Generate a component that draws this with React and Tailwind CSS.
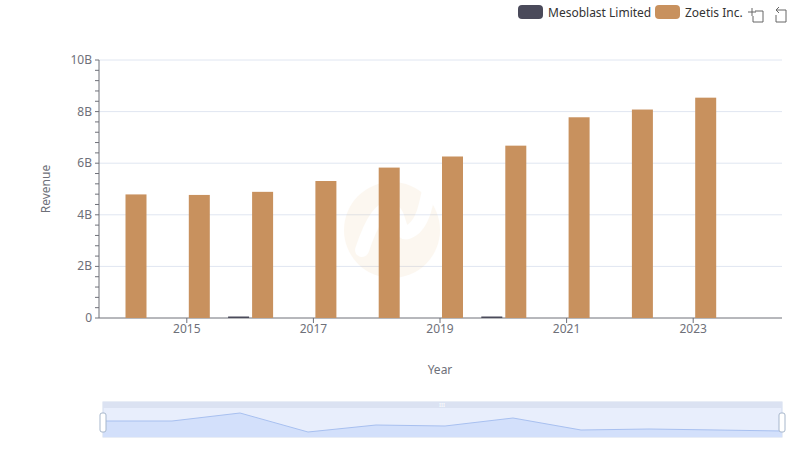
export default function App() {
  const z = [4.79, 4.77, 4.89, 5.31, 5.83, 6.26, 6.68, 7.78, 8.08, 8.54];
  const m = [0, 0, 0.05, 0, 0, 0, 0.03, 0, 0, 0];
  const y0 = 318, per = 25.8;
  const cx = (i) => 123.5 + i * 63.3;
  const slider = [[103,421],[172,421],[240,413],[308,432],[376,425],[445,426],[513,418],[581,430],[649,429],[718,430],[782,431]];
  const line = slider.map(p => p.join(",")).join(" ");
  return (
    <div className="w-[800px] h-[461px] bg-white font-['Liberation_Sans',Arial,sans-serif]">
      <svg width="800" height="461" className="block font-['Liberation_Sans',Arial,sans-serif]">
        <rect x="518" y="5" width="25" height="14" rx="4" fill="#4a4a5a" />
        <text x="548" y="17" fontSize="12" fill="#333">Mesoblast Limited</text>
        <rect x="655" y="5" width="25" height="14" rx="4" fill="#c8915e" />
        <text x="685" y="17" fontSize="12" fill="#333">Zoetis Inc.</text>
        <g stroke="#666" fill="none" strokeWidth="1">
          <path d="M748 12h8M752 8v8M755 11h8v11h-10v-6" />
          <path d="M776 10l3-3M776 10l3 3M776 10h10v12h-10v-7" />
        </g>
        {[0, 2, 4, 6, 8, 10].map((v) => (
          <g key={v}>
            <line x1="99" x2="782" y1={y0 - v * per} y2={y0 - v * per} stroke={v === 0 ? "#6e7079" : "#e0e6f1"} />
            <text x="92" y={y0 - v * per + 4} fontSize="12" fill="#6e7079" textAnchor="end">{v === 0 ? "0" : v + "B"}</text>
          </g>
        ))}
        {Array.from({ length: 26 }).map((_, i) => (
          <line key={i} x1="95" x2="99" y1={y0 - i * per * 0.4} y2={y0 - i * per * 0.4} stroke="#6e7079" />
        ))}
        <line x1="99" x2="99" y1="60" y2="318" stroke="#6e7079" />
        <g opacity="0.1">
          <circle cx="392" cy="230" r="48" fill="#e8b774" />
          <path d="M362 250c10-30 20-45 30-40s5 30 20 20 15-40 20-50" stroke="#fff" strokeWidth="14" fill="none" strokeLinecap="round" />
        </g>
        {z.map((v, i) => (
          <g key={i}>
            <rect x={cx(i) + 2} y={y0 - v * per} width="21" height={v * per} fill="#c8915e" />
            {m[i] > 0 && <rect x={cx(i) - 22} y={y0 - 1.5} width="21" height="1.5" fill="#4a4a5a" />}
          </g>
        ))}
        {[2015, 2017, 2019, 2021, 2023].map((yr) => (
          <g key={yr}>
            <line x1={cx(yr - 2014)} x2={cx(yr - 2014)} y1="318" y2="323" stroke="#6e7079" />
            <text x={cx(yr - 2014)} y="333" fontSize="12" fill="#6e7079" textAnchor="middle">{yr}</text>
          </g>
        ))}
        <text x="440" y="374" fontSize="12" fill="#6e7079" textAnchor="middle">Year</text>
        <text transform="translate(50 189) rotate(-90)" fontSize="12" fill="#6e7079" textAnchor="middle">Revenue</text>
        <rect x="103" y="402" width="679" height="35" fill="#e8eefc" stroke="#d2dbee" />
        <rect x="103" y="402" width="679" height="6" fill="#dbe2f2" />
        <text x="442" y="407" fontSize="6" fill="#fff" textAnchor="middle">III</text>
        <polygon points={`103,437 ${line} 782,437`} fill="#d3e0fb" />
        <polyline points={line} fill="none" stroke="#a8c0f0" />
        <rect x="100" y="413" width="6" height="19" rx="2" fill="#fff" stroke="#a7b7cc" />
        <rect x="779" y="413" width="6" height="19" rx="2" fill="#fff" stroke="#a7b7cc" />
      </svg>
    </div>
  );
}
